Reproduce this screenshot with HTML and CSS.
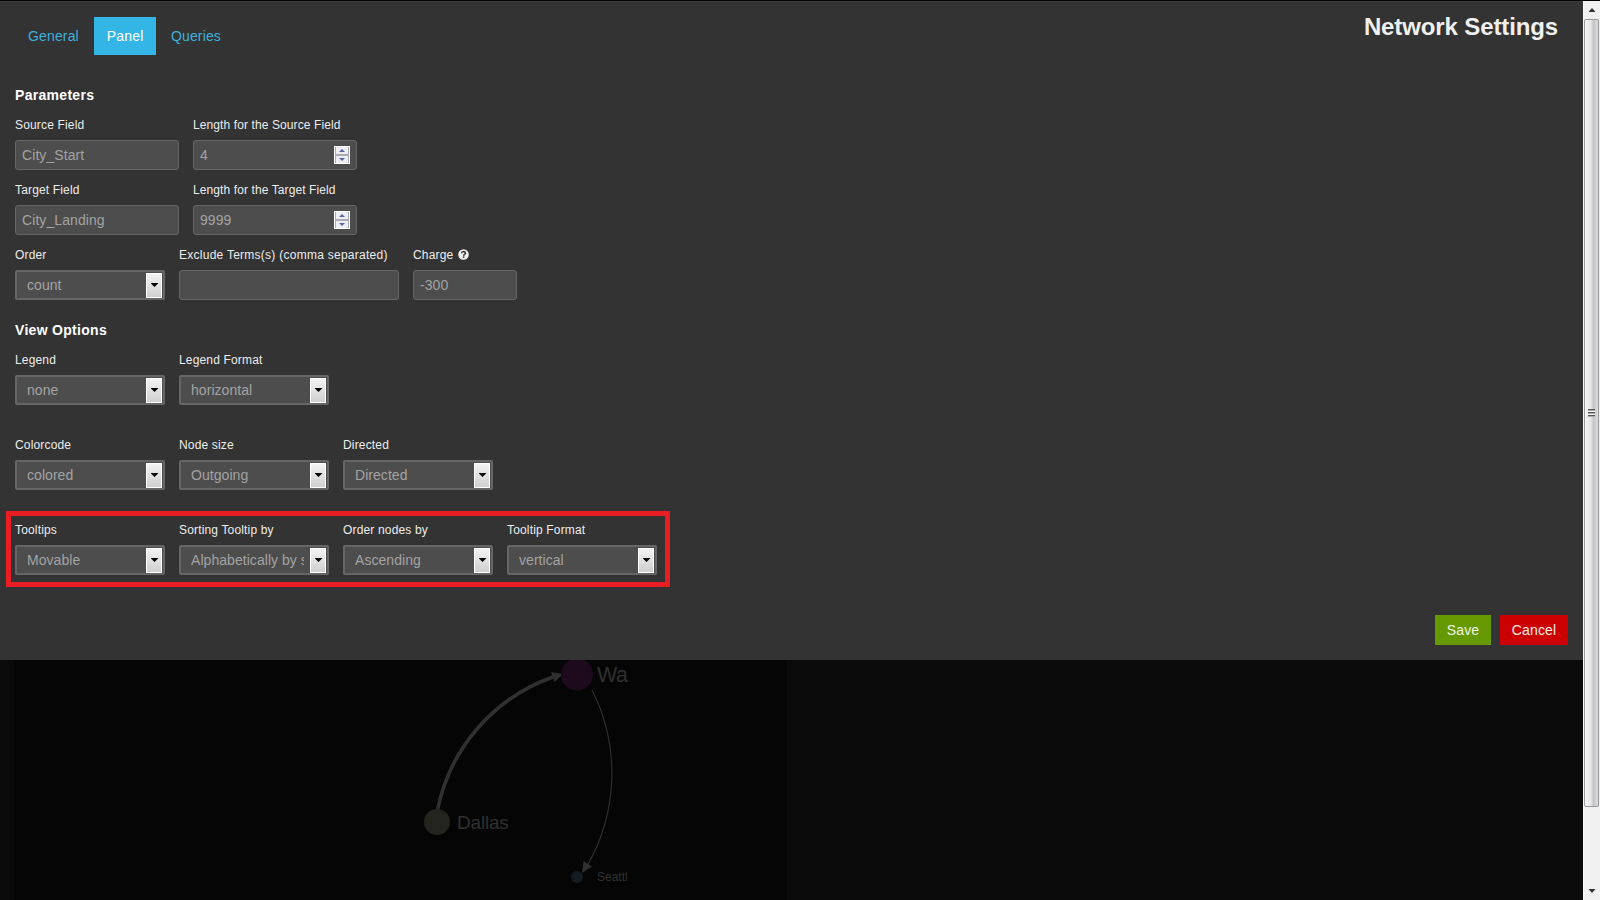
FILE: index.html
```html
<!DOCTYPE html>
<html lang="en">
<head>
<meta charset="utf-8">
<title>Network Settings</title>
<link rel="stylesheet" href="styles.css">
</head>
<body>
<div class="app">
  <main class="stage">
    <section class="modal">
      <header class="head">
        <nav class="tabs">
          <a class="tab">General</a>
          <a class="tab active">Panel</a>
          <a class="tab last">Queries</a>
        </nav>
        <h3 class="title">Network Settings</h3>
      </header>

      <h5 class="section-title">Parameters</h5>
      <div class="row">
        <div class="field w164"><label>Source Field</label><div class="input">City_Start</div></div>
        <div class="field w164"><label class="length">Length for the Source Field</label><div class="input">4<span class="spin"><i class="up"></i><i class="down"></i></span></div></div>
      </div>
      <div class="row">
        <div class="field w164"><label>Target Field</label><div class="input">City_Landing</div></div>
        <div class="field w164"><label class="length">Length for the Target Field</label><div class="input">9999<span class="spin"><i class="up"></i><i class="down"></i></span></div></div>
      </div>
      <div class="row">
        <div class="field"><label>Order</label><div class="select"><span>count</span><b></b></div></div>
        <div class="field w220"><label class="exclude">Exclude Terms(s) (comma separated)</label><div class="input"></div></div>
        <div class="field w104"><label>Charge <svg class="help" viewBox="0 0 11 11"><circle cx="5.5" cy="5.5" r="5.3" fill="#f0f0f0"/><path d="M3.6 4.3C3.7 2 7.4 2 7.4 4.2C7.4 5.4 5.6 5.4 5.6 6.7" fill="none" stroke="#333" stroke-width="1.5"/><rect x="4.8" y="7.4" width="1.6" height="1.5" fill="#333"/></svg></label><div class="input">-300</div></div>
      </div>

      <h5 class="section-title second">View Options</h5>
      <div class="row wide">
        <div class="field"><label>Legend</label><div class="select"><span>none</span><b></b></div></div>
        <div class="field"><label>Legend Format</label><div class="select"><span>horizontal</span><b></b></div></div>
      </div>
      <div class="row wide">
        <div class="field"><label>Colorcode</label><div class="select"><span>colored</span><b></b></div></div>
        <div class="field"><label>Node size</label><div class="select"><span>Outgoing</span><b></b></div></div>
        <div class="field"><label>Directed</label><div class="select"><span>Directed</span><b></b></div></div>
      </div>
      <div class="row marked">
        <div class="field"><label>Tooltips</label><div class="select"><span>Movable</span><b></b></div></div>
        <div class="field"><label>Sorting Tooltip by</label><div class="select"><span>Alphabetically by source</span><b></b></div></div>
        <div class="field"><label>Order nodes by</label><div class="select"><span>Ascending</span><b></b></div></div>
        <div class="field"><label>Tooltip Format</label><div class="select"><span>vertical</span><b></b></div></div>
        <div class="highlight"></div>
      </div>

      <footer class="actions">
        <button class="btn save">Save</button>
        <button class="btn cancel">Cancel</button>
      </footer>
    </section>

    <section class="dashboard">
      <svg class="graph" viewBox="14 660 773 240">
        <g fill="none" stroke="#303030">
          <path d="M437.500 810A178 178 0 0 1 553 677" stroke-width="3.6"/>
          <path d="M592 690A185 185 0 0 1 587 866" stroke-width="1.1"/>
        </g>
        <path d="M551 672L563 674L554.500 682Z" fill="#303030"/>
        <path d="M583.500 861L592 866.500L582 873Z" fill="#303030"/>
        <circle cx="577" cy="674.500" r="16" fill="#1d0a1d"/>
        <circle cx="437" cy="822" r="13" fill="#24241e"/>
        <circle cx="577" cy="877" r="6" fill="#131b22"/>
        <g fill="#303030">
          <text x="597" y="682" font-size="21.5" letter-spacing="-.4">Wa</text>
          <text x="457" y="829" font-size="19" letter-spacing="-.2">Dallas</text>
          <text x="597" y="881" font-size="12">Seattl</text>
        </g>
      </svg>
    </section>
  </main>

  <aside class="scrollbar">
    <svg class="cap" viewBox="0 0 17 18"><path d="M4.500 11L8 7L11.500 11Z" fill="#333"/></svg>
    <div class="thumb"><span class="grip"></span></div>
    <svg class="cap" viewBox="0 0 17 18"><path d="M4.500 8L11.500 8L8 12Z" fill="#333"/></svg>
  </aside>
</div>
</body>
</html>
```
FILE: styles.css
```css
* { box-sizing: border-box; }
body {
  margin: 0;
  width: 1600px;
  height: 900px;
  overflow: hidden;
  background: #000;
  font-family: "Liberation Sans", Arial, sans-serif;
  font-size: 14px;
  line-height: 20px;
}
.app { display: flex; height: 900px; padding-top: 1px; }
.stage { width: 1583px; display: flex; flex-direction: column; background: #0a0a0a; }
.modal { height: 659px; padding: 16px 15px 15px; background: #333; border-top: 1px solid #3c3c3c; }
.head { display: flex; justify-content: space-between; height: 67px; }
.tabs { display: flex; align-items: flex-start; gap: 2px; }
.tab { padding: 9px 13px; color: #3fb0dc; letter-spacing: .15px; margin-top: -1px; }
.tab.active { background: #33b5e5; color: #fff; }
.tab.last { padding-left: 12.5px; }
.title { margin: -11px 10px 0 0; font-size: 24px; line-height: 40px; letter-spacing: -.12px; color: #f0f0f0; }
.section-title { margin: 0 0 10px; font-size: 14px; line-height: 20px; color: #fff; letter-spacing: .3px; }
.section-title.second { margin-top: 20px; }
.row { display: flex; gap: 14px; margin-bottom: 10px; }
.row.wide { margin-bottom: 30px; }
.field { width: 150px; }
.w164 { width: 164px; }
.w220 { width: 220px; }
.w104 { width: 104px; }
label { display: block; height: 20px; margin-bottom: 5px; font-size: 12px; color: #ececec; letter-spacing: .16px; white-space: nowrap; }
.length { letter-spacing: .1px; }
.exclude { letter-spacing: .26px; }
.help { width: 11px; height: 11px; margin-left: 1.5px; vertical-align: -1px; }
.input {
  display: flex;
  justify-content: space-between;
  align-items: center;
  height: 30px;
  padding: 0 6px;
  background: #4d4d4d;
  border: 1px solid #666;
  border-radius: 3px;
  color: #a3a3a3;
  letter-spacing: .08px;
}
.spin { display: flex; flex-direction: column; gap: 2px; width: 16px; height: 18px; background: #a9abb5; border: 1px solid #fff; padding: 0 1px; }
.spin i { flex: 1; display: flex; align-items: center; justify-content: center; background: #eeeef2; }
.spin i::after { content: ""; border: 3px solid transparent; border-top-width: 0; border-bottom: 3px solid #5468a0; }
.spin .down::after { transform: rotate(180deg); }
.select {
  display: flex;
  justify-content: space-between;
  align-items: center;
  height: 30px;
  padding: 0 1px 0 10px;
  background: #4d4d4d;
  border: 2px solid #666;
  border-radius: 2px;
  color: #a3a3a3;
}
.select span { width: 113px; overflow: hidden; white-space: nowrap; letter-spacing: .05px; }
.select b {
  display: flex;
  align-items: center;
  justify-content: center;
  width: 16px;
  height: 25px;
  border: 1px solid #fff;
  background: linear-gradient(#f3f3f3, #cfcfcf);
}
.select b::after { content: ""; width: 8px; height: 4px; margin-left: 1px; background: #000; clip-path: polygon(0 0, 100% 0, 50% 100%); }
.marked { position: relative; margin-bottom: 0; }
.highlight { position: absolute; left: -9px; top: -9px; width: 664px; height: 76px; border: 5px solid #e91d24; }
.actions { display: flex; justify-content: flex-end; gap: 9px; margin-top: 40px; }
.btn { height: 30px; padding: 0; border: 0; font: 14px/30px "Liberation Sans", Arial, sans-serif; letter-spacing: .15px; color: #f2f2e8; }
.save { width: 56px; background: #690; }
.cancel { width: 68px; background: #c00; }
.dashboard { display: flex; flex: 1; padding-left: 14px; }
.graph { width: 773px; height: 240px; background: #050505; font-family: "Liberation Sans", Arial, sans-serif; }
.scrollbar { display: flex; flex-direction: column; width: 17px; background: #f0f0f0; border-left: 1px solid #fafafa; }
.cap { width: 17px; height: 18px; }
.thumb {
  display: flex;
  align-items: center;
  justify-content: center;
  width: 15px;
  height: 788px;
  margin: 0 0 74px;
  border: 1px solid #989898;
  border-radius: 2px;
  background: linear-gradient(90deg, #f6f6f6, #e6e6e8 45%, #c4c5c9 65%, #dcdce0);
}
.grip { width: 7px; height: 8px; background: repeating-linear-gradient(#555 0 1px, #aaa 1px 2px, #f5f5f5 2px 3px); }
```
